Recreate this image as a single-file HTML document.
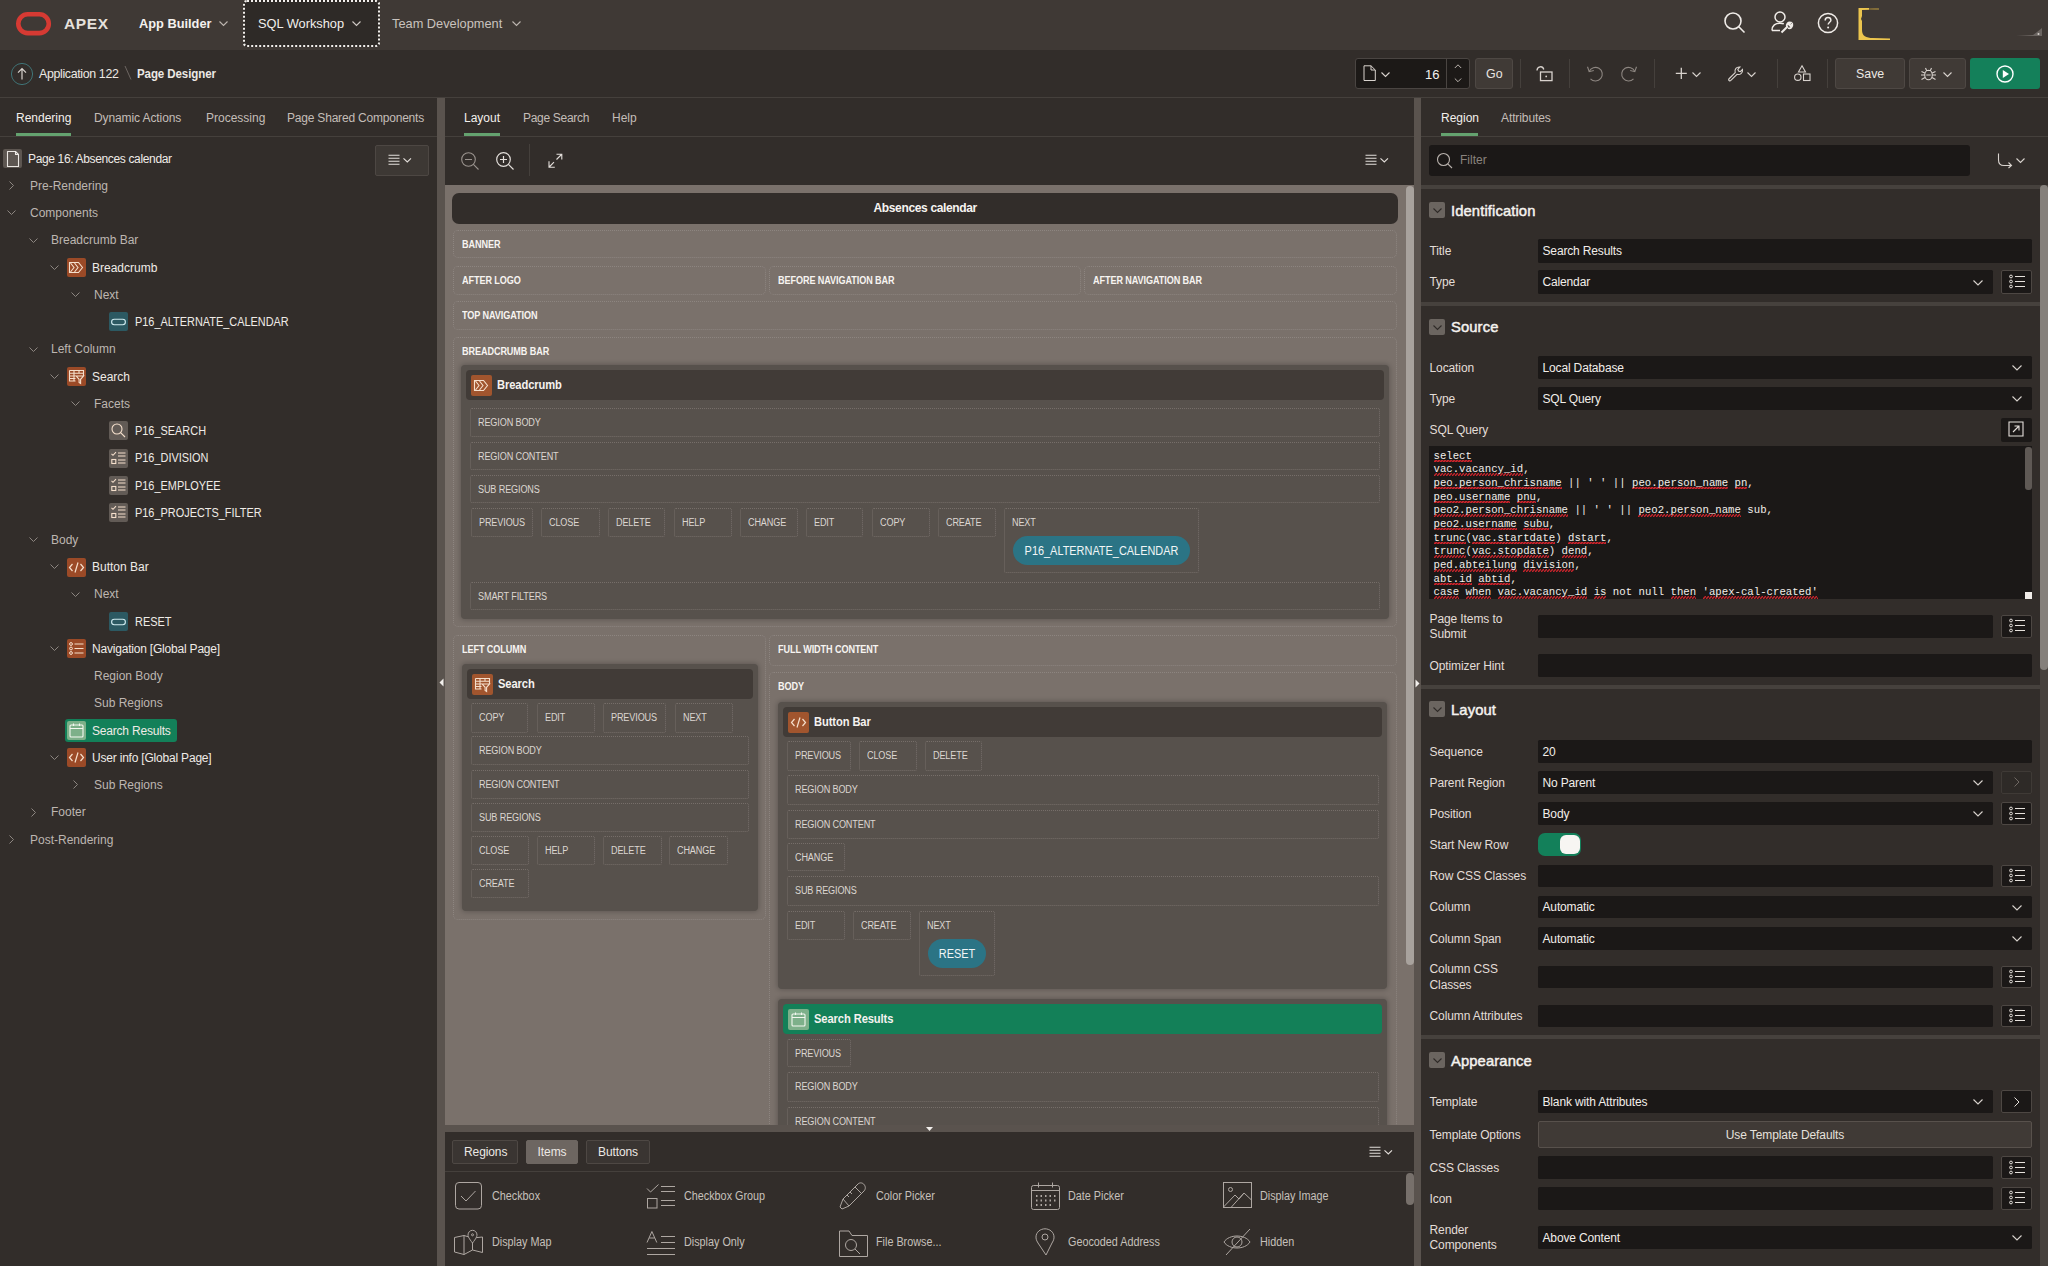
<!DOCTYPE html>
<html><head><meta charset="utf-8">
<style>
*{box-sizing:border-box;margin:0;padding:0}
html,body{width:2048px;height:1266px;overflow:hidden;background:#322d2a;font-family:"Liberation Sans",sans-serif;color:#e9e5e1}
.a{position:absolute}
.t{position:absolute;white-space:nowrap;line-height:1}
svg{position:absolute;overflow:visible}
/* header */
#hdr{left:0;top:0;width:2048px;height:50px;background:#3f3935}
#bc{left:0;top:50px;width:2048px;height:48px;background:#322d2a;border-bottom:1px solid #45403c}
#lp{left:0;top:98px;width:437px;height:1168px;background:#322d2a}
#sp1{left:437px;top:98px;width:8px;height:1168px;background:#5a534e}
#cp{left:445px;top:98px;width:969px;height:1168px;background:#322d2a}
#sp2{left:1414px;top:98px;width:7px;height:1168px;background:#5a534e}
#rp{left:1421px;top:98px;width:627px;height:1168px;background:#322d2a}
.tabline{position:absolute;height:1px;background:#45403c}
.uline{position:absolute;height:3px;background:#5f9b6b}
.code{font-family:"Liberation Mono",monospace;font-size:10.68px;color:#f2eeea;white-space:pre}
.code u{text-decoration:none;padding-bottom:0.5px;background-image:linear-gradient(135deg,transparent 38%,#c8232b 38%,#c8232b 62%,transparent 62%),linear-gradient(45deg,transparent 38%,#c8232b 38%,#c8232b 62%,transparent 62%);background-size:3px 2.5px;background-repeat:repeat-x;background-position:0 100%,1.5px 100%}
</style></head><body>
<div id="hdr" class="a">
 <svg width="40" height="30" style="left:0;top:0"><rect x="18.3" y="14.3" width="30.5" height="18.8" rx="9.4" fill="none" stroke="#d63a33" stroke-width="4.6"/></svg>
 <div class="t" style="left:64px;top:16px;font-size:15.5px;font-weight:700;letter-spacing:0.6px;color:#e6e1dc">APEX</div>
 <div class="t" style="left:139px;top:18px;font-size:12.8px;font-weight:700;color:#f4f1ee">App Builder</div>
 <svg width="10" height="6" style="left:219px;top:21px"><path d="M0.5 0.5 L4.5 4.5 L8.5 0.5" fill="none" stroke="#bdb6b0" stroke-width="1.1"/></svg>
 <div class="a" style="left:243px;top:0px;width:137px;height:47px;background:#2e2a27;border:2px dotted #f2efec;border-radius:4px"></div>
 <div class="t" style="left:258px;top:18px;font-size:12.8px;color:#f2efec">SQL Workshop</div>
 <svg width="10" height="6" style="left:352px;top:21px"><path d="M0.5 0.5 L4.5 4.5 L8.5 0.5" fill="none" stroke="#d0cac5" stroke-width="1.1"/></svg>
 <div class="t" style="left:392px;top:18px;font-size:12.8px;color:#c9c3be">Team Development</div>
 <svg width="10" height="6" style="left:512px;top:21px"><path d="M0.5 0.5 L4.5 4.5 L8.5 0.5" fill="none" stroke="#bdb6b0" stroke-width="1.1"/></svg>
 <!-- right icons -->
 <svg width="24" height="24" style="left:1723px;top:11px"><circle cx="10" cy="10" r="8" fill="none" stroke="#f0ece8" stroke-width="1.6"/><path d="M15.8 15.8 L21.5 21.5" stroke="#f0ece8" stroke-width="1.6"/></svg>
 <svg width="28" height="26" style="left:1769px;top:10px" fill="none" stroke="#f0ece8" stroke-width="1.5"><circle cx="11" cy="7" r="5"/><path d="M3 20.5 C3 15 6.5 13.2 11 13.2 C12.5 13.2 13.8 13.4 14.8 13.8 M3 20.5 L11 20.5"/><path d="M12.5 22.5 L18.8 16.2" stroke-width="2"/><path d="M18 17 C17 14.5 18.8 12 21.8 12.6 L20 14.6 L21.4 16 L23.3 14.2 C23.9 17 21.5 19 19 18" stroke-width="1.8"/></svg>
 <svg width="24" height="24" style="left:1816px;top:11px"><circle cx="12" cy="12" r="9.6" fill="none" stroke="#f0ece8" stroke-width="1.5"/><path d="M9.2 9.6 C9.2 7.6 10.5 6.6 12 6.6 C13.6 6.6 14.9 7.6 14.9 9.2 C14.9 11.2 12.2 11.4 12.2 13.6" fill="none" stroke="#f0ece8" stroke-width="1.5"/><circle cx="12.1" cy="16.6" r="1" fill="#f0ece8"/></svg>
 <svg width="36" height="34" style="left:1857px;top:7px"><path d="M1.5 1 L12 1 L22 1.5 L22 2.5 L5 3 L5 9 L4 12 L5 14 L5 23 C5 29 9 31 16 31 L33 31.5 L33 33 L1.5 33 Z" fill="#ecc54e"/><path d="M12 1 L22 1.5 L22 2.5 L12 3 Z" fill="#6b5a36"/></svg>
 <svg width="30" height="12" style="left:2015px;top:26px"><path d="M1 10 L27 10 L27 2 L22 6 L18 9 Z" fill="#6b6561"/><circle cx="23.5" cy="8" r="1" fill="#d9d4d0"/></svg>
</div>
<div id="bc" class="a">
 <svg width="26" height="26" style="left:10px;top:12px"><circle cx="12" cy="12" r="10.6" fill="none" stroke="#3f7376" stroke-width="1"/><path d="M12 17.5 L12 6.8 M8 10.6 L12 6.6 L16 10.6" fill="none" stroke="#d9d3ce" stroke-width="1.2"/></svg>
 <div class="t" style="left:39px;top:18px;font-size:12.4px;letter-spacing:-0.35px;color:#ece8e4">Application 122</div>
 <svg width="10" height="18" style="left:124px;top:15px"><path d="M1 1 L7 14.5" stroke="#6d6662" stroke-width="1"/></svg>
 <div class="t" style="left:137px;top:18px;font-size:12.4px;font-weight:700;letter-spacing:-0.1px;transform:scaleX(0.93);transform-origin:0 0;color:#ece8e4">Page Designer</div>
 <!-- toolbar -->
 <div class="a" style="left:1355px;top:8px;width:115px;height:31px;background:#1c1917;border:1px solid #4a4542;border-radius:3px"></div>
 <div class="a" style="left:1446px;top:9px;width:1px;height:29px;background:#4a4542"></div>
 <svg width="14" height="18" style="left:1363px;top:15px"><path d="M1 0.8 L8 0.8 L12.3 5 L12.3 15.5 L1 15.5 Z M8 0.8 L8 5 L12.3 5" fill="none" stroke="#d9d3ce" stroke-width="1"/></svg>
 <svg width="12" height="8" style="left:1381px;top:22px"><path d="M0.5 0.5 L4.5 4.5 L8.5 0.5" fill="none" stroke="#d9d3ce" stroke-width="1.1"/></svg>
 <div class="t" style="left:1425px;top:18px;font-size:13px;color:#f4f1ee">16</div>
 <svg width="10" height="22" style="left:1454px;top:14px"><path d="M0.8 4 L4 0.8 L7.2 4 M0.8 14.5 L4 17.7 L7.2 14.5" fill="none" stroke="#bdb6b0" stroke-width="1"/></svg>
 <div class="a" style="left:1475px;top:8px;width:38px;height:31px;background:#403a36;border:1px solid #4e4844;border-radius:3px"></div>
 <div class="t" style="left:1486px;top:18px;font-size:12.4px;color:#e9e5e1">Go</div>
 <div class="a" style="left:1520px;top:9px;width:1px;height:29px;background:#45403c"></div>
 <svg width="20" height="20" style="left:1536px;top:15px"><path d="M1 5.5 C1 1.5 6.5 0 7.8 4.5" fill="none" stroke="#d9d3ce" stroke-width="1.3"/><rect x="4.5" y="7" width="11.5" height="8.6" fill="none" stroke="#d9d3ce" stroke-width="1.3"/><circle cx="10.2" cy="11.4" r="0.9" fill="#d9d3ce"/></svg>
 <div class="a" style="left:1569px;top:9px;width:1px;height:29px;background:#45403c"></div>
 <svg width="20" height="20" style="left:1586px;top:15px"><path d="M3.2 6.5 A6.8 6.8 0 1 1 4.5 13.8" fill="none" stroke="#8d8681" stroke-width="1.1"/><path d="M1.5 1.8 L3.2 6.7 L7.8 5.5" fill="none" stroke="#8d8681" stroke-width="1.1"/></svg>
 <svg width="20" height="20" style="left:1621px;top:15px"><path d="M13.8 6.5 A6.8 6.8 0 1 0 12.5 13.8" fill="none" stroke="#8d8681" stroke-width="1.1"/><path d="M15.5 1.8 L13.8 6.7 L9.2 5.5" fill="none" stroke="#8d8681" stroke-width="1.1"/></svg>
 <div class="a" style="left:1654px;top:9px;width:1px;height:29px;background:#45403c"></div>
 <svg width="14" height="14" style="left:1675px;top:17px"><path d="M6.3 0.8 L6.3 12 M0.8 6.4 L11.8 6.4" stroke="#d9d3ce" stroke-width="1.3"/></svg>
 <svg width="12" height="8" style="left:1692px;top:22px"><path d="M0.5 0.5 L4.5 4.5 L8.5 0.5" fill="none" stroke="#d9d3ce" stroke-width="1.1"/></svg>
 <svg width="18" height="18" style="left:1727px;top:15px"><path d="M1.8 14 L8.2 7.6 C7.2 4.5 9.5 1.5 13 2 L10.8 4.3 L11.5 6 L13.3 6.7 L15.5 4.5 C16 8 13 10.3 10 9.3 L3.6 15.7 C2.8 16.5 1 15 1.8 14 Z" fill="none" stroke="#d9d3ce" stroke-width="1.1"/></svg>
 <svg width="12" height="8" style="left:1747px;top:22px"><path d="M0.5 0.5 L4.5 4.5 L8.5 0.5" fill="none" stroke="#d9d3ce" stroke-width="1.1"/></svg>
 <div class="a" style="left:1777px;top:9px;width:1px;height:29px;background:#45403c"></div>
 <svg width="20" height="20" style="left:1794px;top:15px"><path d="M8 0.8 L11.5 7 L4.5 7 Z" fill="none" stroke="#d9d3ce" stroke-width="1.1"/><circle cx="3.8" cy="12.2" r="3.2" fill="none" stroke="#d9d3ce" stroke-width="1.1"/><rect x="9.5" y="9" width="6.5" height="6.5" fill="none" stroke="#d9d3ce" stroke-width="1.1"/></svg>
 <div class="a" style="left:1827px;top:9px;width:1px;height:29px;background:#45403c"></div>
 <div class="a" style="left:1835px;top:8px;width:70px;height:31px;background:#403a36;border:1px solid #4e4844;border-radius:3px"></div>
 <div class="t" style="left:1856px;top:18px;font-size:12.4px;color:#ece8e4">Save</div>
 <div class="a" style="left:1909px;top:8px;width:57px;height:31px;background:#403a36;border:1px solid #4e4844;border-radius:3px"></div>
 <svg width="18" height="18" style="left:1920px;top:15px"><ellipse cx="8.5" cy="10" rx="3.8" ry="4.8" fill="none" stroke="#d9d3ce" stroke-width="1.1"/><path d="M5.5 3 L6.5 5.2 M11.5 3 L10.5 5.2 M6.2 5.5 L10.8 5.5 M1.5 6.5 L4.8 8 M15.5 6.5 L12.2 8 M1 10 L4.7 10 M16 10 L12.3 10 M1.5 14.5 L5 12.5 M15.5 14.5 L12 12.5 M6.3 10 L10.7 10" fill="none" stroke="#d9d3ce" stroke-width="1.1"/></svg>
 <svg width="12" height="8" style="left:1943px;top:22px"><path d="M0.5 0.5 L4.5 4.5 L8.5 0.5" fill="none" stroke="#d9d3ce" stroke-width="1.1"/></svg>
 <div class="a" style="left:1970px;top:8px;width:70px;height:31px;background:#14805a;border-radius:3px"></div>
 <svg width="20" height="20" style="left:1995px;top:14px"><circle cx="10" cy="10" r="8" fill="none" stroke="#ffffff" stroke-width="1.4"/><path d="M7.8 6 L14 10 L7.8 14 Z" fill="#ffffff"/></svg>
</div>
<div id="lp" class="a"></div>
<div id="lpc">
<div class="t" style="left:16px;top:111.84px;font-size:12px;font-weight:400;color:#f3f0ec;">Rendering</div>
<div class="t" style="left:94px;top:111.84px;font-size:12px;font-weight:400;letter-spacing:-0.1px;color:#c4bdb8;">Dynamic Actions</div>
<div class="t" style="left:206px;top:111.84px;font-size:12px;font-weight:400;color:#c4bdb8;">Processing</div>
<div class="t" style="left:287px;top:111.84px;font-size:12px;font-weight:400;letter-spacing:-0.2px;color:#c4bdb8;">Page Shared Components</div>
<div class="a" style="left:16px;top:133px;width:55px;height:3px;background:#64a26f"></div>
<div class="a" style="left:0px;top:136px;width:437px;height:1px;background:#45403c"></div>
<svg width="19" height="19" style="left:3px;top:149px"><rect x="0" y="0" width="19" height="19" rx="2" fill="#5d5651"/><path d="M4.5 2.5 L12.5 2.5 L15.5 5.5 L15.5 17.5 L4.5 17.5 Z M12.5 2.5 L12.5 5.5 L15.5 5.5" fill="none" stroke="#ece8e4" stroke-width="1.1" stroke-linejoin="round"/></svg>
<div class="t" style="left:28px;top:152.64px;font-size:12px;font-weight:400;letter-spacing:-0.35px;color:#efebe7;">Page 16: Absences calendar</div>
<div class="a" style="left:375px;top:145px;width:54px;height:31px;background:#3d3834;border:1px solid #4d4743;border-radius:2px"></div>
<svg width="30" height="14" style="left:388px;top:154px"><path d="M0.5 1.2 L11.5 1.2 M0.5 4.2 L11.5 4.2 M0.5 7.2 L11.5 7.2 M0.5 10.2 L11.5 10.2" stroke="#e4dfdb" stroke-width="1.1"/><path d="M15.5 4.3 L19.3 8 L23 4.3" fill="none" stroke="#e4dfdb" stroke-width="1.1"/></svg>
<svg width="7" height="11" style="left:9px;top:181px"><path d="M0.5 0.5 L4.5 4.5 L0.5 8.5" fill="none" stroke="#8d8681" stroke-width="1"/></svg>
<div class="t" style="left:30px;top:179.88px;font-size:12px;font-weight:400;color:#bdb6b1;">Pre-Rendering</div>
<svg width="11" height="7" style="left:7px;top:210px"><path d="M0.5 0.5 L4.5 4.5 L8.5 0.5" fill="none" stroke="#8d8681" stroke-width="1"/></svg>
<div class="t" style="left:30px;top:207.12px;font-size:12px;font-weight:400;color:#bdb6b1;">Components</div>
<svg width="11" height="7" style="left:29px;top:238px"><path d="M0.5 0.5 L4.5 4.5 L8.5 0.5" fill="none" stroke="#8d8681" stroke-width="1"/></svg>
<div class="t" style="left:51px;top:234.36px;font-size:12px;font-weight:400;color:#bdb6b1;">Breadcrumb Bar</div>
<svg width="11" height="7" style="left:50px;top:265px"><path d="M0.5 0.5 L4.5 4.5 L8.5 0.5" fill="none" stroke="#8d8681" stroke-width="1"/></svg>
<svg width="19" height="19" style="left:67px;top:258px"><rect x="0" y="0" width="19" height="19" rx="2" fill="#9b4a27"/><g transform="scale(1.0)"><path d="M2.5 4.5 L11.5 4.5 L15.5 9.5 L11.5 14.5 L2.5 14.5 Z" fill="none" stroke="#f5dfcc" stroke-width="1.1"/><path d="M3.5 5 L7 9.5 L3.5 14 M7.5 5 L11 9.5 L7.5 14" fill="none" stroke="#f5dfcc" stroke-width="1.1"/></g></svg>
<div class="t" style="left:92px;top:261.60px;font-size:12px;font-weight:400;color:#efebe7;">Breadcrumb</div>
<svg width="11" height="7" style="left:71px;top:292px"><path d="M0.5 0.5 L4.5 4.5 L8.5 0.5" fill="none" stroke="#8d8681" stroke-width="1"/></svg>
<div class="t" style="left:94px;top:288.84px;font-size:12px;font-weight:400;color:#bdb6b1;">Next</div>
<svg width="19" height="19" style="left:109px;top:312px"><rect x="0" y="0" width="19" height="19" rx="2" fill="#2c5962"/><rect x="2.6" y="7.3" width="13.8" height="5.4" rx="2.7" fill="none" stroke="#cfeaee" stroke-width="1.1"/></svg>
<div class="t" style="left:135px;top:316.08px;font-size:12px;font-weight:400;transform:scaleX(0.91);transform-origin:0 0;color:#efebe7;">P16_ALTERNATE_CALENDAR</div>
<svg width="11" height="7" style="left:29px;top:347px"><path d="M0.5 0.5 L4.5 4.5 L8.5 0.5" fill="none" stroke="#8d8681" stroke-width="1"/></svg>
<div class="t" style="left:51px;top:343.32px;font-size:12px;font-weight:400;color:#bdb6b1;">Left Column</div>
<svg width="11" height="7" style="left:50px;top:374px"><path d="M0.5 0.5 L4.5 4.5 L8.5 0.5" fill="none" stroke="#8d8681" stroke-width="1"/></svg>
<svg width="19" height="19" style="left:67px;top:367px"><rect x="0" y="0" width="19" height="19" rx="2" fill="#9b4a27"/><g transform="scale(1.0)" fill="none" stroke="#f5dfcc" stroke-width="1.1"><path d="M2.5 3.5 L16.5 3.5 L16.5 9 M2.5 3.5 L2.5 14 L8.5 14 M2.5 6.3 L16.5 6.3 M2.5 9 L8.5 9 M2.5 11.5 L8.5 11.5 M7 3.5 L7 14 M12 3.5 L12 6.3"/><path d="M9.2 9 L16.5 9 L13.6 12.3 L13.6 16.5 L12.1 15.5 L12.1 12.3 Z"/></g></svg>
<div class="t" style="left:92px;top:370.56px;font-size:12px;font-weight:400;color:#efebe7;">Search</div>
<svg width="11" height="7" style="left:71px;top:401px"><path d="M0.5 0.5 L4.5 4.5 L8.5 0.5" fill="none" stroke="#8d8681" stroke-width="1"/></svg>
<div class="t" style="left:94px;top:397.80px;font-size:12px;font-weight:400;color:#bdb6b1;">Facets</div>
<svg width="19" height="19" style="left:109px;top:421px"><rect x="0" y="0" width="19" height="19" rx="2" fill="#625b56"/><circle cx="8" cy="8" r="5" fill="none" stroke="#f5dfcc" stroke-width="1.1"/><path d="M11.6 11.6 L16 16" stroke="#f5dfcc" stroke-width="1.1"/></svg>
<div class="t" style="left:135px;top:425.04px;font-size:12px;font-weight:400;transform:scaleX(0.91);transform-origin:0 0;color:#efebe7;">P16_SEARCH</div>
<svg width="19" height="19" style="left:109px;top:449px"><rect x="0" y="0" width="19" height="19" rx="2" fill="#625b56"/><path d="M2.5 4.8 L4 6.3 L7 3.2" fill="none" stroke="#f5dfcc" stroke-width="1.1"/><rect x="2.8" y="10.5" width="4" height="4" fill="none" stroke="#f5dfcc" stroke-width="1.1"/><path d="M9 4 L16.5 4 M9 7 L16.5 7 M9 11 L16.5 11 M9 14 L16.5 14" stroke="#f5dfcc" stroke-width="1.1"/></svg>
<div class="t" style="left:135px;top:452.28px;font-size:12px;font-weight:400;transform:scaleX(0.91);transform-origin:0 0;color:#efebe7;">P16_DIVISION</div>
<svg width="19" height="19" style="left:109px;top:476px"><rect x="0" y="0" width="19" height="19" rx="2" fill="#625b56"/><path d="M2.5 4.8 L4 6.3 L7 3.2" fill="none" stroke="#f5dfcc" stroke-width="1.1"/><rect x="2.8" y="10.5" width="4" height="4" fill="none" stroke="#f5dfcc" stroke-width="1.1"/><path d="M9 4 L16.5 4 M9 7 L16.5 7 M9 11 L16.5 11 M9 14 L16.5 14" stroke="#f5dfcc" stroke-width="1.1"/></svg>
<div class="t" style="left:135px;top:479.52px;font-size:12px;font-weight:400;transform:scaleX(0.91);transform-origin:0 0;color:#efebe7;">P16_EMPLOYEE</div>
<svg width="19" height="19" style="left:109px;top:503px"><rect x="0" y="0" width="19" height="19" rx="2" fill="#625b56"/><path d="M2.5 4.8 L4 6.3 L7 3.2" fill="none" stroke="#f5dfcc" stroke-width="1.1"/><rect x="2.8" y="10.5" width="4" height="4" fill="none" stroke="#f5dfcc" stroke-width="1.1"/><path d="M9 4 L16.5 4 M9 7 L16.5 7 M9 11 L16.5 11 M9 14 L16.5 14" stroke="#f5dfcc" stroke-width="1.1"/></svg>
<div class="t" style="left:135px;top:506.76px;font-size:12px;font-weight:400;transform:scaleX(0.91);transform-origin:0 0;color:#efebe7;">P16_PROJECTS_FILTER</div>
<svg width="11" height="7" style="left:29px;top:537px"><path d="M0.5 0.5 L4.5 4.5 L8.5 0.5" fill="none" stroke="#8d8681" stroke-width="1"/></svg>
<div class="t" style="left:51px;top:534.00px;font-size:12px;font-weight:400;color:#bdb6b1;">Body</div>
<svg width="11" height="7" style="left:50px;top:564px"><path d="M0.5 0.5 L4.5 4.5 L8.5 0.5" fill="none" stroke="#8d8681" stroke-width="1"/></svg>
<svg width="19" height="19" style="left:67px;top:558px"><rect x="0" y="0" width="19" height="19" rx="2" fill="#9b4a27"/><g transform="scale(1.0)"><path d="M5.5 6 L2.5 9.5 L5.5 13 M13.5 6 L16.5 9.5 L13.5 13 M11 4.5 L8 14.5" fill="none" stroke="#f5dfcc" stroke-width="1.2"/></g></svg>
<div class="t" style="left:92px;top:561.24px;font-size:12px;font-weight:400;color:#efebe7;">Button Bar</div>
<svg width="11" height="7" style="left:71px;top:592px"><path d="M0.5 0.5 L4.5 4.5 L8.5 0.5" fill="none" stroke="#8d8681" stroke-width="1"/></svg>
<div class="t" style="left:94px;top:588.48px;font-size:12px;font-weight:400;color:#bdb6b1;">Next</div>
<svg width="19" height="19" style="left:109px;top:612px"><rect x="0" y="0" width="19" height="19" rx="2" fill="#2c5962"/><rect x="2.6" y="7.3" width="13.8" height="5.4" rx="2.7" fill="none" stroke="#cfeaee" stroke-width="1.1"/></svg>
<div class="t" style="left:135px;top:615.72px;font-size:12px;font-weight:400;transform:scaleX(0.91);transform-origin:0 0;color:#efebe7;">RESET</div>
<svg width="11" height="7" style="left:50px;top:646px"><path d="M0.5 0.5 L4.5 4.5 L8.5 0.5" fill="none" stroke="#8d8681" stroke-width="1"/></svg>
<svg width="19" height="19" style="left:67px;top:639px"><rect x="0" y="0" width="19" height="19" rx="2" fill="#9b4a27"/><g transform="scale(1.0)"><circle cx="4" cy="5" r="1.4" fill="none" stroke="#f5dfcc" stroke-width="1"/><circle cx="4" cy="9.5" r="1.4" fill="none" stroke="#f5dfcc" stroke-width="1"/><circle cx="4" cy="14" r="1.4" fill="none" stroke="#f5dfcc" stroke-width="1"/><path d="M7.5 5 L16.5 5 M7.5 9.5 L16.5 9.5 M7.5 14 L16.5 14" stroke="#f5dfcc" stroke-width="1.1"/></g></svg>
<div class="t" style="left:92px;top:642.96px;font-size:12px;font-weight:400;letter-spacing:-0.2px;color:#efebe7;">Navigation [Global Page]</div>
<div class="t" style="left:94px;top:670.20px;font-size:12px;font-weight:400;color:#bdb6b1;">Region Body</div>
<div class="t" style="left:94px;top:697.44px;font-size:12px;font-weight:400;color:#bdb6b1;">Sub Regions</div>
<div class="a" style="left:65px;top:719.1px;width:112px;height:23px;background:#138059;border-radius:3px"></div>
<svg width="19" height="19" style="left:67px;top:721px"><rect x="0" y="0" width="19" height="19" rx="2" fill="#7db089"/><rect x="3" y="4" width="13" height="12" rx="1" fill="none" stroke="#f3f7ef" stroke-width="1.1"/><path d="M3 7.5 L16 7.5 M6.5 2.5 L6.5 5 M12.5 2.5 L12.5 5" stroke="#f3f7ef" stroke-width="1.1"/></svg>
<div class="t" style="left:92px;top:724.68px;font-size:12px;font-weight:400;letter-spacing:-0.2px;color:#efebe7;">Search Results</div>
<svg width="11" height="7" style="left:50px;top:755px"><path d="M0.5 0.5 L4.5 4.5 L8.5 0.5" fill="none" stroke="#8d8681" stroke-width="1"/></svg>
<svg width="19" height="19" style="left:67px;top:748px"><rect x="0" y="0" width="19" height="19" rx="2" fill="#9b4a27"/><g transform="scale(1.0)"><path d="M5.5 6 L2.5 9.5 L5.5 13 M13.5 6 L16.5 9.5 L13.5 13 M11 4.5 L8 14.5" fill="none" stroke="#f5dfcc" stroke-width="1.2"/></g></svg>
<div class="t" style="left:92px;top:751.92px;font-size:12px;font-weight:400;letter-spacing:-0.2px;color:#efebe7;">User info [Global Page]</div>
<svg width="7" height="11" style="left:73px;top:780px"><path d="M0.5 0.5 L4.5 4.5 L0.5 8.5" fill="none" stroke="#8d8681" stroke-width="1"/></svg>
<div class="t" style="left:94px;top:779.16px;font-size:12px;font-weight:400;color:#bdb6b1;">Sub Regions</div>
<svg width="7" height="11" style="left:31px;top:808px"><path d="M0.5 0.5 L4.5 4.5 L0.5 8.5" fill="none" stroke="#8d8681" stroke-width="1"/></svg>
<div class="t" style="left:51px;top:806.40px;font-size:12px;font-weight:400;color:#bdb6b1;">Footer</div>
<svg width="7" height="11" style="left:9px;top:835px"><path d="M0.5 0.5 L4.5 4.5 L0.5 8.5" fill="none" stroke="#8d8681" stroke-width="1"/></svg>
<div class="t" style="left:30px;top:833.64px;font-size:12px;font-weight:400;color:#bdb6b1;">Post-Rendering</div>
</div>
<div id="sp1" class="a"></div>
<div id="cp" class="a"></div>
<!--C--><div class="t" style="left:464px;top:111.84px;font-size:12px;font-weight:400;color:#f3f0ec;">Layout</div>
<div class="t" style="left:523px;top:111.84px;font-size:12px;font-weight:400;letter-spacing:-0.3px;color:#c4bdb8;">Page Search</div>
<div class="t" style="left:612px;top:111.84px;font-size:12px;font-weight:400;color:#c4bdb8;">Help</div>
<div class="a" style="left:464px;top:133px;width:36px;height:3px;background:#64a26f"></div>
<div class="a" style="left:445px;top:136px;width:969px;height:1px;background:#45403c"></div>
<svg width="22" height="22" style="left:460px;top:151px"><circle cx="8.5" cy="8.5" r="6.8" fill="none" stroke="#9a938e" stroke-width="1.1"/><path d="M13.4 13.4 L18.5 18.5 M5 8.5 L12 8.5" stroke="#9a938e" stroke-width="1.1"/></svg>
<svg width="22" height="22" style="left:495px;top:151px"><circle cx="8.5" cy="8.5" r="6.8" fill="none" stroke="#e4dfdb" stroke-width="1.2"/><path d="M13.4 13.4 L18.5 18.5 M5 8.5 L12 8.5 M8.5 5 L8.5 12" stroke="#e4dfdb" stroke-width="1.2"/></svg>
<div class="a" style="left:529px;top:144px;width:1px;height:32px;background:#45403c"></div>
<svg width="18" height="18" style="left:548px;top:153px"><path d="M1.2 14 L6 9.2 M8.5 6.5 L13.5 1.5 M8.5 1.2 L13.8 1.2 L13.8 6.5 M1 8.3 L1 14.2 L6.8 14.2" fill="none" stroke="#e4dfdb" stroke-width="1.1"/></svg>
<svg width="30" height="14" style="left:1365px;top:154px"><path d="M0.5 1.2 L11.5 1.2 M0.5 4.2 L11.5 4.2 M0.5 7.2 L11.5 7.2 M0.5 10.2 L11.5 10.2" stroke="#e4dfdb" stroke-width="1.1"/><path d="M15.5 4.3 L19.3 8 L23 4.3" fill="none" stroke="#e4dfdb" stroke-width="1.1"/></svg>
<div class="a" style="left:445px;top:185px;width:969px;height:940px;background:#7a716b;overflow:hidden" id="canvas"></div>
<div class="a" style="left:0;top:0;width:2048px;height:1125px;clip-path:inset(185px 634px 0 445px)"><div class="a" style="left:452px;top:193px;width:946px;height:31px;background:#322d2a;border-radius:7px;"></div>
<div class="t" style="left:873.5px;top:202.04px;font-size:12px;font-weight:700;letter-spacing:-0.35px;color:#f7f4f1;">Absences calendar</div>
<div class="a" style="left:453px;top:230px;width:944px;height:28px;background:transparent;border:1px dotted #8d8580;border-radius:5px;"></div><div class="t" style="left:461.5px;top:239.53px;font-size:10px;font-weight:700;letter-spacing:-0.1px;transform:scaleX(0.91);transform-origin:0 0;color:#f7f4f1;">BANNER</div>
<div class="a" style="left:453px;top:266px;width:313px;height:29px;background:transparent;border:1px dotted #8d8580;border-radius:5px;"></div><div class="t" style="left:461.5px;top:275.54px;font-size:10px;font-weight:700;letter-spacing:-0.1px;transform:scaleX(0.91);transform-origin:0 0;color:#f7f4f1;">AFTER LOGO</div>
<div class="a" style="left:769px;top:266px;width:312px;height:29px;background:transparent;border:1px dotted #8d8580;border-radius:5px;"></div><div class="t" style="left:777.5px;top:275.54px;font-size:10px;font-weight:700;letter-spacing:-0.1px;transform:scaleX(0.91);transform-origin:0 0;color:#f7f4f1;">BEFORE NAVIGATION BAR</div>
<div class="a" style="left:1084px;top:266px;width:313px;height:29px;background:transparent;border:1px dotted #8d8580;border-radius:5px;"></div><div class="t" style="left:1092.5px;top:275.54px;font-size:10px;font-weight:700;letter-spacing:-0.1px;transform:scaleX(0.91);transform-origin:0 0;color:#f7f4f1;">AFTER NAVIGATION BAR</div>
<div class="a" style="left:453px;top:301px;width:944px;height:29px;background:transparent;border:1px dotted #8d8580;border-radius:5px;"></div><div class="t" style="left:461.5px;top:310.54px;font-size:10px;font-weight:700;letter-spacing:-0.1px;transform:scaleX(0.91);transform-origin:0 0;color:#f7f4f1;">TOP NAVIGATION</div>
<div class="a" style="left:453px;top:337px;width:944px;height:290px;background:transparent;border:1px dotted #8d8580;border-radius:5px;"></div><div class="t" style="left:461.5px;top:346.54px;font-size:10px;font-weight:700;letter-spacing:-0.1px;transform:scaleX(0.91);transform-origin:0 0;color:#f7f4f1;">BREADCRUMB BAR</div>
<div class="a" style="left:461px;top:365px;width:928px;height:254px;background:#57514c;border-radius:4px;box-shadow:0 0 5px 1px rgba(0,0,0,0.22)"></div><div class="a" style="left:466px;top:370px;width:918px;height:30px;background:#413b37;border-radius:4px;"></div><svg width="21" height="21" style="left:471px;top:374.5px"><rect width="21" height="21" rx="2" fill="#a1552e"/><g transform="translate(1,1)"><g transform="scale(1.0)"><path d="M2.5 4.5 L11.5 4.5 L15.5 9.5 L11.5 14.5 L2.5 14.5 Z" fill="none" stroke="#f5dfcc" stroke-width="1.1"/><path d="M3.5 5 L7 9.5 L3.5 14 M7.5 5 L11 9.5 L7.5 14" fill="none" stroke="#f5dfcc" stroke-width="1.1"/></g></g></svg><div class="t" style="left:497px;top:379.14px;font-size:12px;font-weight:700;letter-spacing:-0.1px;transform:scaleX(0.93);transform-origin:0 0;color:#f5f2ef;">Breadcrumb</div>
<div class="a" style="left:470px;top:408px;width:910px;height:29px;background:transparent;border:1px dotted #766e69;border-radius:2px;"></div><div class="t" style="left:478px;top:417.54px;font-size:10px;font-weight:400;letter-spacing:-0.15px;transform:scaleX(0.91);transform-origin:0 0;color:#dcd6d1;">REGION BODY</div>
<div class="a" style="left:470px;top:442px;width:910px;height:28px;background:transparent;border:1px dotted #766e69;border-radius:2px;"></div><div class="t" style="left:478px;top:451.54px;font-size:10px;font-weight:400;letter-spacing:-0.15px;transform:scaleX(0.91);transform-origin:0 0;color:#dcd6d1;">REGION CONTENT</div>
<div class="a" style="left:470px;top:475px;width:910px;height:28px;background:transparent;border:1px dotted #766e69;border-radius:2px;"></div><div class="t" style="left:478px;top:484.54px;font-size:10px;font-weight:400;letter-spacing:-0.15px;transform:scaleX(0.91);transform-origin:0 0;color:#dcd6d1;">SUB REGIONS</div>
<div class="a" style="left:471px;top:508px;width:62px;height:29px;background:transparent;border:1px dotted #766e69;border-radius:2px;"></div><div class="t" style="left:479px;top:517.53px;font-size:10px;font-weight:400;letter-spacing:-0.15px;transform:scaleX(0.91);transform-origin:0 0;color:#dcd6d1;">PREVIOUS</div>
<div class="a" style="left:541px;top:508px;width:59px;height:29px;background:transparent;border:1px dotted #766e69;border-radius:2px;"></div><div class="t" style="left:549px;top:517.53px;font-size:10px;font-weight:400;letter-spacing:-0.15px;transform:scaleX(0.91);transform-origin:0 0;color:#dcd6d1;">CLOSE</div>
<div class="a" style="left:608px;top:508px;width:57px;height:29px;background:transparent;border:1px dotted #766e69;border-radius:2px;"></div><div class="t" style="left:616px;top:517.53px;font-size:10px;font-weight:400;letter-spacing:-0.15px;transform:scaleX(0.91);transform-origin:0 0;color:#dcd6d1;">DELETE</div>
<div class="a" style="left:674px;top:508px;width:58px;height:29px;background:transparent;border:1px dotted #766e69;border-radius:2px;"></div><div class="t" style="left:682px;top:517.53px;font-size:10px;font-weight:400;letter-spacing:-0.15px;transform:scaleX(0.91);transform-origin:0 0;color:#dcd6d1;">HELP</div>
<div class="a" style="left:740px;top:508px;width:58px;height:29px;background:transparent;border:1px dotted #766e69;border-radius:2px;"></div><div class="t" style="left:748px;top:517.53px;font-size:10px;font-weight:400;letter-spacing:-0.15px;transform:scaleX(0.91);transform-origin:0 0;color:#dcd6d1;">CHANGE</div>
<div class="a" style="left:806px;top:508px;width:57px;height:29px;background:transparent;border:1px dotted #766e69;border-radius:2px;"></div><div class="t" style="left:814px;top:517.53px;font-size:10px;font-weight:400;letter-spacing:-0.15px;transform:scaleX(0.91);transform-origin:0 0;color:#dcd6d1;">EDIT</div>
<div class="a" style="left:872px;top:508px;width:58px;height:29px;background:transparent;border:1px dotted #766e69;border-radius:2px;"></div><div class="t" style="left:880px;top:517.53px;font-size:10px;font-weight:400;letter-spacing:-0.15px;transform:scaleX(0.91);transform-origin:0 0;color:#dcd6d1;">COPY</div>
<div class="a" style="left:938px;top:508px;width:58px;height:29px;background:transparent;border:1px dotted #766e69;border-radius:2px;"></div><div class="t" style="left:946px;top:517.53px;font-size:10px;font-weight:400;letter-spacing:-0.15px;transform:scaleX(0.91);transform-origin:0 0;color:#dcd6d1;">CREATE</div>
<div class="a" style="left:1004px;top:508px;width:195px;height:65px;background:transparent;border:1px dotted #766e69;border-radius:2px;"></div><div class="t" style="left:1012px;top:517.53px;font-size:10px;font-weight:400;letter-spacing:-0.15px;transform:scaleX(0.91);transform-origin:0 0;color:#dcd6d1;">NEXT</div>
<div class="a" style="left:1013px;top:536px;width:177px;height:29px;background:#2b7485;border-radius:15px"></div><div class="t" style="left:1013px;width:177px;text-align:center;top:544.74px;font-size:12px;transform:scaleX(0.91);transform-origin:50% 0;color:#f1f6f7">P16_ALTERNATE_CALENDAR</div>
<div class="a" style="left:470px;top:582px;width:910px;height:28px;background:transparent;border:1px dotted #766e69;border-radius:2px;"></div><div class="t" style="left:478px;top:591.53px;font-size:10px;font-weight:400;letter-spacing:-0.15px;transform:scaleX(0.91);transform-origin:0 0;color:#dcd6d1;">SMART FILTERS</div>
<div class="a" style="left:453px;top:635px;width:313px;height:285px;background:transparent;border:1px dotted #8d8580;border-radius:5px;"></div><div class="t" style="left:461.5px;top:644.53px;font-size:10px;font-weight:700;letter-spacing:-0.1px;transform:scaleX(0.91);transform-origin:0 0;color:#f7f4f1;">LEFT COLUMN</div>
<div class="a" style="left:462px;top:664px;width:296px;height:247px;background:#57514c;border-radius:4px;box-shadow:0 0 5px 1px rgba(0,0,0,0.22)"></div><div class="a" style="left:467px;top:669px;width:286px;height:30px;background:#413b37;border-radius:4px;"></div><svg width="21" height="21" style="left:472px;top:673.5px"><rect width="21" height="21" rx="2" fill="#a1552e"/><g transform="translate(1,1)"><g transform="scale(1.0)" fill="none" stroke="#f5dfcc" stroke-width="1.1"><path d="M2.5 3.5 L16.5 3.5 L16.5 9 M2.5 3.5 L2.5 14 L8.5 14 M2.5 6.3 L16.5 6.3 M2.5 9 L8.5 9 M2.5 11.5 L8.5 11.5 M7 3.5 L7 14 M12 3.5 L12 6.3"/><path d="M9.2 9 L16.5 9 L13.6 12.3 L13.6 16.5 L12.1 15.5 L12.1 12.3 Z"/></g></g></svg><div class="t" style="left:498px;top:678.14px;font-size:12px;font-weight:700;letter-spacing:-0.1px;transform:scaleX(0.93);transform-origin:0 0;color:#f5f2ef;">Search</div>
<div class="a" style="left:471px;top:703px;width:57px;height:30px;background:transparent;border:1px dotted #766e69;border-radius:2px;"></div><div class="t" style="left:479px;top:712.53px;font-size:10px;font-weight:400;letter-spacing:-0.15px;transform:scaleX(0.91);transform-origin:0 0;color:#dcd6d1;">COPY</div>
<div class="a" style="left:537px;top:703px;width:58px;height:30px;background:transparent;border:1px dotted #766e69;border-radius:2px;"></div><div class="t" style="left:545px;top:712.53px;font-size:10px;font-weight:400;letter-spacing:-0.15px;transform:scaleX(0.91);transform-origin:0 0;color:#dcd6d1;">EDIT</div>
<div class="a" style="left:603px;top:703px;width:63px;height:30px;background:transparent;border:1px dotted #766e69;border-radius:2px;"></div><div class="t" style="left:611px;top:712.53px;font-size:10px;font-weight:400;letter-spacing:-0.15px;transform:scaleX(0.91);transform-origin:0 0;color:#dcd6d1;">PREVIOUS</div>
<div class="a" style="left:675px;top:703px;width:58px;height:30px;background:transparent;border:1px dotted #766e69;border-radius:2px;"></div><div class="t" style="left:683px;top:712.53px;font-size:10px;font-weight:400;letter-spacing:-0.15px;transform:scaleX(0.91);transform-origin:0 0;color:#dcd6d1;">NEXT</div>
<div class="a" style="left:471px;top:736px;width:278px;height:29px;background:transparent;border:1px dotted #766e69;border-radius:2px;"></div><div class="t" style="left:479px;top:745.53px;font-size:10px;font-weight:400;letter-spacing:-0.15px;transform:scaleX(0.91);transform-origin:0 0;color:#dcd6d1;">REGION BODY</div>
<div class="a" style="left:471px;top:770px;width:278px;height:29px;background:transparent;border:1px dotted #766e69;border-radius:2px;"></div><div class="t" style="left:479px;top:779.53px;font-size:10px;font-weight:400;letter-spacing:-0.15px;transform:scaleX(0.91);transform-origin:0 0;color:#dcd6d1;">REGION CONTENT</div>
<div class="a" style="left:471px;top:803px;width:278px;height:29px;background:transparent;border:1px dotted #766e69;border-radius:2px;"></div><div class="t" style="left:479px;top:812.53px;font-size:10px;font-weight:400;letter-spacing:-0.15px;transform:scaleX(0.91);transform-origin:0 0;color:#dcd6d1;">SUB REGIONS</div>
<div class="a" style="left:471px;top:836px;width:58px;height:29px;background:transparent;border:1px dotted #766e69;border-radius:2px;"></div><div class="t" style="left:479px;top:845.53px;font-size:10px;font-weight:400;letter-spacing:-0.15px;transform:scaleX(0.91);transform-origin:0 0;color:#dcd6d1;">CLOSE</div>
<div class="a" style="left:537px;top:836px;width:58px;height:29px;background:transparent;border:1px dotted #766e69;border-radius:2px;"></div><div class="t" style="left:545px;top:845.53px;font-size:10px;font-weight:400;letter-spacing:-0.15px;transform:scaleX(0.91);transform-origin:0 0;color:#dcd6d1;">HELP</div>
<div class="a" style="left:603px;top:836px;width:59px;height:29px;background:transparent;border:1px dotted #766e69;border-radius:2px;"></div><div class="t" style="left:611px;top:845.53px;font-size:10px;font-weight:400;letter-spacing:-0.15px;transform:scaleX(0.91);transform-origin:0 0;color:#dcd6d1;">DELETE</div>
<div class="a" style="left:669px;top:836px;width:59px;height:29px;background:transparent;border:1px dotted #766e69;border-radius:2px;"></div><div class="t" style="left:677px;top:845.53px;font-size:10px;font-weight:400;letter-spacing:-0.15px;transform:scaleX(0.91);transform-origin:0 0;color:#dcd6d1;">CHANGE</div>
<div class="a" style="left:471px;top:869px;width:58px;height:29px;background:transparent;border:1px dotted #766e69;border-radius:2px;"></div><div class="t" style="left:479px;top:878.53px;font-size:10px;font-weight:400;letter-spacing:-0.15px;transform:scaleX(0.91);transform-origin:0 0;color:#dcd6d1;">CREATE</div>
<div class="a" style="left:769px;top:635px;width:628px;height:31px;background:transparent;border:1px dotted #8d8580;border-radius:5px;"></div><div class="t" style="left:777.5px;top:644.53px;font-size:10px;font-weight:700;letter-spacing:-0.1px;transform:scaleX(0.91);transform-origin:0 0;color:#f7f4f1;">FULL WIDTH CONTENT</div>
<div class="a" style="left:769px;top:672px;width:628px;height:528px;background:transparent;border:1px dotted #8d8580;border-radius:5px;"></div><div class="t" style="left:777.5px;top:681.53px;font-size:10px;font-weight:700;letter-spacing:-0.1px;transform:scaleX(0.91);transform-origin:0 0;color:#f7f4f1;">BODY</div>
<div class="a" style="left:778px;top:702px;width:609px;height:287px;background:#57514c;border-radius:4px;box-shadow:0 0 5px 1px rgba(0,0,0,0.22)"></div><div class="a" style="left:783px;top:707px;width:599px;height:30px;background:#413b37;border-radius:4px;"></div><svg width="21" height="21" style="left:788px;top:711.5px"><rect width="21" height="21" rx="2" fill="#a1552e"/><g transform="translate(1,1)"><g transform="scale(1.0)"><path d="M5.5 6 L2.5 9.5 L5.5 13 M13.5 6 L16.5 9.5 L13.5 13 M11 4.5 L8 14.5" fill="none" stroke="#f5dfcc" stroke-width="1.2"/></g></g></svg><div class="t" style="left:814px;top:716.14px;font-size:12px;font-weight:700;letter-spacing:-0.1px;transform:scaleX(0.93);transform-origin:0 0;color:#f5f2ef;">Button Bar</div>
<div class="a" style="left:787px;top:741px;width:64px;height:30px;background:transparent;border:1px dotted #766e69;border-radius:2px;"></div><div class="t" style="left:795px;top:750.53px;font-size:10px;font-weight:400;letter-spacing:-0.15px;transform:scaleX(0.91);transform-origin:0 0;color:#dcd6d1;">PREVIOUS</div>
<div class="a" style="left:859px;top:741px;width:58px;height:30px;background:transparent;border:1px dotted #766e69;border-radius:2px;"></div><div class="t" style="left:867px;top:750.53px;font-size:10px;font-weight:400;letter-spacing:-0.15px;transform:scaleX(0.91);transform-origin:0 0;color:#dcd6d1;">CLOSE</div>
<div class="a" style="left:925px;top:741px;width:57px;height:30px;background:transparent;border:1px dotted #766e69;border-radius:2px;"></div><div class="t" style="left:933px;top:750.53px;font-size:10px;font-weight:400;letter-spacing:-0.15px;transform:scaleX(0.91);transform-origin:0 0;color:#dcd6d1;">DELETE</div>
<div class="a" style="left:787px;top:775px;width:592px;height:30px;background:transparent;border:1px dotted #766e69;border-radius:2px;"></div><div class="t" style="left:795px;top:784.53px;font-size:10px;font-weight:400;letter-spacing:-0.15px;transform:scaleX(0.91);transform-origin:0 0;color:#dcd6d1;">REGION BODY</div>
<div class="a" style="left:787px;top:810px;width:592px;height:29px;background:transparent;border:1px dotted #766e69;border-radius:2px;"></div><div class="t" style="left:795px;top:819.53px;font-size:10px;font-weight:400;letter-spacing:-0.15px;transform:scaleX(0.91);transform-origin:0 0;color:#dcd6d1;">REGION CONTENT</div>
<div class="a" style="left:787px;top:843px;width:58px;height:28px;background:transparent;border:1px dotted #766e69;border-radius:2px;"></div><div class="t" style="left:795px;top:852.53px;font-size:10px;font-weight:400;letter-spacing:-0.15px;transform:scaleX(0.91);transform-origin:0 0;color:#dcd6d1;">CHANGE</div>
<div class="a" style="left:787px;top:876px;width:592px;height:30px;background:transparent;border:1px dotted #766e69;border-radius:2px;"></div><div class="t" style="left:795px;top:885.53px;font-size:10px;font-weight:400;letter-spacing:-0.15px;transform:scaleX(0.91);transform-origin:0 0;color:#dcd6d1;">SUB REGIONS</div>
<div class="a" style="left:787px;top:911px;width:58px;height:29px;background:transparent;border:1px dotted #766e69;border-radius:2px;"></div><div class="t" style="left:795px;top:920.53px;font-size:10px;font-weight:400;letter-spacing:-0.15px;transform:scaleX(0.91);transform-origin:0 0;color:#dcd6d1;">EDIT</div>
<div class="a" style="left:853px;top:911px;width:58px;height:29px;background:transparent;border:1px dotted #766e69;border-radius:2px;"></div><div class="t" style="left:861px;top:920.53px;font-size:10px;font-weight:400;letter-spacing:-0.15px;transform:scaleX(0.91);transform-origin:0 0;color:#dcd6d1;">CREATE</div>
<div class="a" style="left:919px;top:911px;width:76px;height:65px;background:transparent;border:1px dotted #766e69;border-radius:2px;"></div><div class="t" style="left:927px;top:920.53px;font-size:10px;font-weight:400;letter-spacing:-0.15px;transform:scaleX(0.91);transform-origin:0 0;color:#dcd6d1;">NEXT</div>
<div class="a" style="left:928px;top:939px;width:58px;height:29px;background:#2b7485;border-radius:15px"></div><div class="t" style="left:928px;width:58px;text-align:center;top:947.74px;font-size:12px;transform:scaleX(0.91);transform-origin:50% 0;color:#f1f6f7">RESET</div>
<div class="a" style="left:778px;top:999px;width:609px;height:301px;background:#57514c;border-radius:4px;box-shadow:0 0 5px 1px rgba(0,0,0,0.22)"></div><div class="a" style="left:783px;top:1004px;width:599px;height:30px;background:#138058;border-radius:4px;"></div><svg width="21" height="21" style="left:788px;top:1008.5px"><rect width="21" height="21" rx="2" fill="#7db08a"/><g transform="translate(1,1)"><rect x="3" y="4" width="13" height="12" rx="1" fill="none" stroke="#f3f7ef" stroke-width="1.1"/><path d="M3 7.5 L16 7.5 M6.5 2.5 L6.5 5 M12.5 2.5 L12.5 5" stroke="#f3f7ef" stroke-width="1.1"/></g></svg><div class="t" style="left:814px;top:1013.14px;font-size:12px;font-weight:700;letter-spacing:-0.1px;transform:scaleX(0.93);transform-origin:0 0;color:#f5f2ef;">Search Results</div>
<div class="a" style="left:787px;top:1039px;width:64px;height:28px;background:transparent;border:1px dotted #766e69;border-radius:2px;"></div><div class="t" style="left:795px;top:1048.54px;font-size:10px;font-weight:400;letter-spacing:-0.15px;transform:scaleX(0.91);transform-origin:0 0;color:#dcd6d1;">PREVIOUS</div>
<div class="a" style="left:787px;top:1072px;width:592px;height:30px;background:transparent;border:1px dotted #766e69;border-radius:2px;"></div><div class="t" style="left:795px;top:1081.54px;font-size:10px;font-weight:400;letter-spacing:-0.15px;transform:scaleX(0.91);transform-origin:0 0;color:#dcd6d1;">REGION BODY</div>
<div class="a" style="left:787px;top:1107px;width:592px;height:33px;background:transparent;border:1px dotted #766e69;border-radius:2px;"></div><div class="t" style="left:795px;top:1116.54px;font-size:10px;font-weight:400;letter-spacing:-0.15px;transform:scaleX(0.91);transform-origin:0 0;color:#dcd6d1;">REGION CONTENT</div>
<div class="a" style="left:1406px;top:186px;width:8px;height:779px;background:#a8a29d;border-radius:4px"></div></div>
<div class="a" style="left:445px;top:1125px;width:969px;height:7px;background:#5a534e"></div>
<svg width="10" height="6" style="left:926px;top:1126.5px"><path d="M0 0 L7 0 L3.5 4 Z" fill="#f2efec"/></svg>
<div class="a" style="left:445px;top:1132px;width:969px;height:134px;background:#322d2a"></div>
<div class="a" style="left:452px;top:1140px;width:66px;height:24px;background:#3a3532;border:1px solid #4e4844;border-radius:2px"></div>
<div class="t" style="left:464px;top:1145.84px;font-size:12px;font-weight:400;letter-spacing:-0.1px;color:#ece8e4;">Regions</div>
<div class="a" style="left:526px;top:1140px;width:52px;height:24px;background:#6d6661;border:1px solid #6d6661;border-radius:2px"></div>
<div class="t" style="left:537.6px;top:1145.84px;font-size:12px;font-weight:400;letter-spacing:-0.1px;color:#ece8e4;">Items</div>
<div class="a" style="left:586px;top:1140px;width:64px;height:24px;background:#3a3532;border:1px solid #4e4844;border-radius:2px"></div>
<div class="t" style="left:598px;top:1145.84px;font-size:12px;font-weight:400;letter-spacing:-0.1px;color:#ece8e4;">Buttons</div>
<svg width="30" height="14" style="left:1369px;top:1146px"><path d="M0.5 1.2 L11.5 1.2 M0.5 4.2 L11.5 4.2 M0.5 7.2 L11.5 7.2 M0.5 10.2 L11.5 10.2" stroke="#e4dfdb" stroke-width="1.1"/><path d="M15.5 4.3 L19.3 8 L23 4.3" fill="none" stroke="#e4dfdb" stroke-width="1.1"/></svg>
<div class="a" style="left:445px;top:1171px;width:969px;height:1px;background:#45403c"></div>
<div class="a" style="left:1406px;top:1173px;width:8px;height:32px;background:#77706b;border-radius:4px"></div>
<svg width="30" height="30" style="left:455px;top:1182px" fill="none" stroke="#aea7a2" stroke-width="1"><rect x="0.5" y="0.5" width="26" height="26.5" rx="3.5"/><path d="M6 14 L11 19 L20.5 9"/></svg>
<div class="t" style="left:491.5px;top:1189.84px;font-size:12px;font-weight:400;transform:scaleX(0.9);transform-origin:0 0;color:#c6c0bb;">Checkbox</div>
<svg width="30" height="30" style="left:455px;top:1228px" fill="none" stroke="#aea7a2" stroke-width="1"><path d="M-0.5 9.5 L9 7.5 L17.5 10 L27.5 9 L27.5 24.5 L17.5 22 L9 26.5 L-0.5 24 Z M9 7.5 L9 26.5 M17.5 13 L17.5 22"/><path d="M17.5 15 C14 10.5 13 8.5 13 7 C13 4.3 15 2.3 17.5 2.3 C20 2.3 22 4.3 22 7 C22 8.5 21 10.5 17.5 15 Z" fill="#322d2a"/><circle cx="17.5" cy="6.8" r="1"/></svg>
<div class="t" style="left:491.5px;top:1236.14px;font-size:12px;font-weight:400;transform:scaleX(0.9);transform-origin:0 0;color:#c6c0bb;">Display Map</div>
<svg width="30" height="30" style="left:647px;top:1182px" fill="none" stroke="#aea7a2" stroke-width="1"><path d="M0 6.5 L3.5 10 L11.5 2.5 M14 4.5 L28 4.5 M14 9.5 L28 9.5 M14 18.5 L28 18.5 M14 23.5 L28 23.5"/><rect x="0.5" y="16.5" width="9.5" height="9.5"/></svg>
<div class="t" style="left:683.5px;top:1189.84px;font-size:12px;font-weight:400;transform:scaleX(0.9);transform-origin:0 0;color:#c6c0bb;">Checkbox Group</div>
<svg width="30" height="30" style="left:647px;top:1228px" fill="none" stroke="#aea7a2" stroke-width="1"><path d="M0 14.5 L4.9 3.5 L9.8 14.5 M2.2 10 L7.6 10 M14 8.5 L28 8.5 M14 14.5 L28 14.5 M0 20.5 L28 20.5 M0 26.5 L28 26.5"/></svg>
<div class="t" style="left:683.5px;top:1236.14px;font-size:12px;font-weight:400;transform:scaleX(0.9);transform-origin:0 0;color:#c6c0bb;">Display Only</div>
<svg width="30" height="30" style="left:839px;top:1182px" fill="none" stroke="#aea7a2" stroke-width="1"><path d="M3 27 L1 25 L4 17 L19 2 C21 0 24 1 25 2.5 C26.5 4 27 7 25 9 L10 24 Z M4 17 L10 24 M16 5 L22 11 M8 13 L10 15 M11 10 L13 12"/></svg>
<div class="t" style="left:875.5px;top:1189.84px;font-size:12px;font-weight:400;transform:scaleX(0.9);transform-origin:0 0;color:#c6c0bb;">Color Picker</div>
<svg width="30" height="30" style="left:839px;top:1228px" fill="none" stroke="#aea7a2" stroke-width="1"><path d="M0.5 3 L0.5 28.5 L28.5 28.5 L28.5 7.5 L13 7.5 L10 3 Z"/><circle cx="12" cy="17" r="5.5"/><path d="M16 21 L21 26"/></svg>
<div class="t" style="left:875.5px;top:1236.14px;font-size:12px;font-weight:400;transform:scaleX(0.9);transform-origin:0 0;color:#c6c0bb;">File Browse...</div>
<svg width="30" height="30" style="left:1031px;top:1182px" fill="none" stroke="#aea7a2" stroke-width="1"><rect x="0.5" y="3.5" width="28" height="24" rx="2"/><path d="M0.5 8.5 L28.5 8.5 M7.5 0.5 L7.5 5.5 M21.5 0.5 L21.5 5.5"/><g stroke-width="2" stroke-dasharray="1.5 3"><path d="M5 14 L25 14 M5 18.5 L25 18.5 M5 23 L21 23"/></g></svg>
<div class="t" style="left:1067.5px;top:1189.84px;font-size:12px;font-weight:400;transform:scaleX(0.9);transform-origin:0 0;color:#c6c0bb;">Date Picker</div>
<svg width="30" height="30" style="left:1031px;top:1228px" fill="none" stroke="#aea7a2" stroke-width="1"><path d="M11 27 L3 15 C1 12 1 10 1 9 C1 4 5.5 0.8 10 0.8 C14.5 0.8 19 4 19 9 C19 10 19 12 17 15 Z" transform="translate(4,0)"/><circle cx="14" cy="9" r="3"/></svg>
<div class="t" style="left:1067.5px;top:1236.14px;font-size:12px;font-weight:400;transform:scaleX(0.9);transform-origin:0 0;color:#c6c0bb;">Geocoded Address</div>
<svg width="30" height="30" style="left:1223px;top:1182px" fill="none" stroke="#aea7a2" stroke-width="1"><rect x="0.5" y="0.5" width="28" height="25"/><circle cx="7.5" cy="7.5" r="2"/><path d="M0.5 25 L12 13 L16 17 L21 11 L28.5 18 M8 25.5 L21 11"/></svg>
<div class="t" style="left:1259.5px;top:1189.84px;font-size:12px;font-weight:400;transform:scaleX(0.9);transform-origin:0 0;color:#c6c0bb;">Display Image</div>
<svg width="30" height="30" style="left:1223px;top:1228px" fill="none" stroke="#aea7a2" stroke-width="1"><path d="M1 14 C6 6 22 6 27 14 C22 22 6 22 1 14 Z"/><circle cx="14" cy="14" r="5"/><path d="M3 27 L27 1"/></svg>
<div class="t" style="left:1259.5px;top:1236.14px;font-size:12px;font-weight:400;transform:scaleX(0.9);transform-origin:0 0;color:#c6c0bb;">Hidden</div>
<svg width="6" height="10" style="left:439px;top:678px"><path d="M4.5 0.5 L0.5 4.5 L4.5 8.5 Z" fill="#f2efec"/></svg>
<svg width="6" height="10" style="left:1415px;top:679px;z-index:5"><path d="M0.5 0.5 L4.5 4.5 L0.5 8.5 Z" fill="#f2efec"/></svg>
<!--/C-->
<div id="sp2" class="a"></div>
<div id="rp" class="a"></div>
<!--R--><div class="t" style="left:1441px;top:111.84px;font-size:12px;font-weight:400;color:#f3f0ec;">Region</div>
<div class="t" style="left:1501px;top:111.84px;font-size:12px;font-weight:400;letter-spacing:-0.1px;color:#c4bdb8;">Attributes</div>
<div class="a" style="left:1441px;top:133px;width:37px;height:3px;background:#64a26f"></div>
<div class="a" style="left:1421px;top:136px;width:627px;height:1px;background:#45403c"></div>
<div class="a" style="left:1429px;top:145px;width:541px;height:31px;background:#1b1817;border-radius:3px"></div>
<svg width="20" height="20" style="left:1436px;top:152px"><circle cx="7.5" cy="7.5" r="6" fill="none" stroke="#b9b2ad" stroke-width="1.1"/><path d="M11.8 11.8 L16 16" stroke="#b9b2ad" stroke-width="1.1"/></svg>
<div class="t" style="left:1460px;top:154.34px;font-size:12px;font-weight:400;color:#8a837e;">Filter</div>
<svg width="30" height="16" style="left:1997px;top:153px" fill="none" stroke="#d9d3ce" stroke-width="1.1"><path d="M1.5 0.5 L1.5 7 C1.5 10.5 3.5 12.5 7 12.5 L14.5 12.5 M11.5 9.5 L14.5 12.5 L11.5 15"/><path d="M19.5 5.5 L23.5 9.5 L27.5 5.5"/></svg>
<div class="a" style="left:2040px;top:185px;width:8px;height:1081px;background:#46413d"></div>
<div class="a" style="left:2040px;top:185px;width:8px;height:485px;background:#85807b;border-radius:4px"></div>
<div class="a" style="left:1421px;top:185px;width:619px;height:4px;background:#46413d"></div><div class="a" style="left:1429px;top:202.3px;width:16px;height:16px;background:#6b6560;border-radius:2px"></div><svg width="10" height="6" style="left:1432.5px;top:208.3px"><path d="M0.5 0.5 L4.5 4.5 L8.5 0.5" fill="none" stroke="#2f2b28" stroke-width="1.1"/></svg><div class="t" style="left:1451px;top:203.53px;font-size:14.5px;font-weight:400;letter-spacing:0.1px;transform:scaleX(1.02);transform-origin:0 0;color:#f5f2ef;-webkit-text-stroke:0.45px #f5f2ef">Identification</div>
<div class="t" style="left:1429.5px;top:245.24px;font-size:12px;font-weight:400;letter-spacing:-0.1px;color:#e3ddd8;">Title</div><div class="a" style="left:1538px;top:239px;width:494px;height:24px;background:#1b1817;border-radius:1.5px"></div><div class="t" style="left:1542.5px;top:245.24px;font-size:12px;font-weight:400;letter-spacing:-0.15px;color:#f2eeea;">Search Results</div>
<div class="t" style="left:1429.5px;top:276.24px;font-size:12px;font-weight:400;letter-spacing:-0.1px;color:#e3ddd8;">Type</div><div class="a" style="left:1538px;top:270px;width:455px;height:24px;background:#1b1817;border-radius:1.5px"></div><div class="t" style="left:1542.5px;top:276.24px;font-size:12px;font-weight:400;letter-spacing:-0.15px;color:#f2eeea;">Calendar</div><svg width="12" height="8" style="left:1972.5px;top:279.5px"><path d="M0.5 0.5 L5 5 L9.5 0.5" fill="none" stroke="#d9d3ce" stroke-width="1.1"/></svg><div class="a" style="left:2001px;top:270px;width:31px;height:24px;background:#1b1817;border:1px solid #4d4743;border-radius:2px"></div><svg width="22" height="16" style="left:2006px;top:274px" fill="none" stroke="#e6e1dc" stroke-width="1"><circle cx="5" cy="2.5" r="1.4"/><circle cx="5" cy="7.5" r="1.4"/><circle cx="5" cy="12.5" r="1.4"/><path d="M9 2.5 L19 2.5 M9 7.5 L19 7.5 M9 12.5 L19 12.5"/></svg>
<div class="a" style="left:1421px;top:302px;width:619px;height:4px;background:#46413d"></div><div class="a" style="left:1429px;top:319.1px;width:16px;height:16px;background:#6b6560;border-radius:2px"></div><svg width="10" height="6" style="left:1432.5px;top:325.1px"><path d="M0.5 0.5 L4.5 4.5 L8.5 0.5" fill="none" stroke="#2f2b28" stroke-width="1.1"/></svg><div class="t" style="left:1451px;top:320.33px;font-size:14.5px;font-weight:400;letter-spacing:0.1px;transform:scaleX(1.02);transform-origin:0 0;color:#f5f2ef;-webkit-text-stroke:0.45px #f5f2ef">Source</div>
<div class="t" style="left:1429.5px;top:361.74px;font-size:12px;font-weight:400;letter-spacing:-0.1px;color:#e3ddd8;">Location</div><div class="a" style="left:1538px;top:356px;width:494px;height:23px;background:#1b1817;border-radius:1.5px"></div><div class="t" style="left:1542.5px;top:361.74px;font-size:12px;font-weight:400;letter-spacing:-0.15px;color:#f2eeea;">Local Database</div><svg width="12" height="8" style="left:2011.5px;top:365.0px"><path d="M0.5 0.5 L5 5 L9.5 0.5" fill="none" stroke="#d9d3ce" stroke-width="1.1"/></svg>
<div class="t" style="left:1429.5px;top:392.74px;font-size:12px;font-weight:400;letter-spacing:-0.1px;color:#e3ddd8;">Type</div><div class="a" style="left:1538px;top:387px;width:494px;height:23px;background:#1b1817;border-radius:1.5px"></div><div class="t" style="left:1542.5px;top:392.74px;font-size:12px;font-weight:400;letter-spacing:-0.15px;color:#f2eeea;">SQL Query</div><svg width="12" height="8" style="left:2011.5px;top:396.0px"><path d="M0.5 0.5 L5 5 L9.5 0.5" fill="none" stroke="#d9d3ce" stroke-width="1.1"/></svg>
<div class="t" style="left:1429.5px;top:423.74px;font-size:12px;font-weight:400;letter-spacing:-0.1px;color:#e3ddd8;">SQL Query</div>
<div class="a" style="left:2001px;top:418px;width:31px;height:24px;background:#1b1817;border-radius:2px"></div>
<svg width="18" height="18" style="left:2008px;top:421px" fill="none" stroke="#e6e1dc" stroke-width="1.1"><path d="M1 1 L15 1 L15 15 L1 15 Z M5 11 L11 5 M6.5 5 L11 5 L11 9.5"/></svg>
<div class="a" style="left:1429px;top:446px;width:603px;height:153px;background:#1b1817;overflow:hidden">
<div class="t code" style="left:4.5px;top:4.59px"><u>select</u></div>
<div class="t code" style="left:4.5px;top:18.27px"><u>vac.vacancy_id</u>,</div>
<div class="t code" style="left:4.5px;top:31.95px"><u>peo.person_chrisname</u> || &#x27; &#x27; || <u>peo.person_name</u> <u>pn</u>,</div>
<div class="t code" style="left:4.5px;top:45.63px"><u>peo.username</u> <u>pnu</u>,</div>
<div class="t code" style="left:4.5px;top:59.30px"><u>peo2.person_chrisname</u> || &#x27; &#x27; || <u>peo2.person_name</u> sub,</div>
<div class="t code" style="left:4.5px;top:72.99px"><u>peo2.username</u> <u>subu</u>,</div>
<div class="t code" style="left:4.5px;top:86.66px"><u>trunc</u>(<u>vac.startdate</u>) <u>dstart</u>,</div>
<div class="t code" style="left:4.5px;top:100.34px"><u>trunc</u>(<u>vac.stopdate</u>) <u>dend</u>,</div>
<div class="t code" style="left:4.5px;top:114.03px"><u>ped.abteilung</u> <u>division</u>,</div>
<div class="t code" style="left:4.5px;top:127.71px"><u>abt.id</u> <u>abtid</u>,</div>
<div class="t code" style="left:4.5px;top:141.39px"><u>case</u> <u>when</u> <u>vac.vacancy_id</u> <u>is</u> not null <u>then</u> <u>&#x27;apex-cal-created&#x27;</u></div>
</div>
<div class="a" style="left:2025px;top:447px;width:7px;height:43px;background:#5f5955;border-radius:3px"></div>
<div class="a" style="left:2025px;top:592px;width:7px;height:7px;background:#f0ece8"></div>
<div class="t" style="left:1429.5px;top:612.84px;font-size:12px;font-weight:400;letter-spacing:-0.1px;color:#e3ddd8;">Page Items to</div><div class="t" style="left:1429.5px;top:628.34px;font-size:12px;font-weight:400;letter-spacing:-0.1px;color:#e3ddd8;">Submit</div><div class="a" style="left:1538px;top:615px;width:455px;height:23px;background:#1b1817;border-radius:1.5px"></div><div class="a" style="left:2001px;top:615px;width:31px;height:23px;background:#1b1817;border:1px solid #4d4743;border-radius:2px"></div><svg width="22" height="16" style="left:2006px;top:618px" fill="none" stroke="#e6e1dc" stroke-width="1"><circle cx="5" cy="2.5" r="1.4"/><circle cx="5" cy="7.5" r="1.4"/><circle cx="5" cy="12.5" r="1.4"/><path d="M9 2.5 L19 2.5 M9 7.5 L19 7.5 M9 12.5 L19 12.5"/></svg>
<div class="t" style="left:1429.5px;top:659.74px;font-size:12px;font-weight:400;letter-spacing:-0.1px;color:#e3ddd8;">Optimizer Hint</div><div class="a" style="left:1538px;top:654px;width:494px;height:23px;background:#1b1817;border-radius:1.5px"></div>
<div class="a" style="left:1421px;top:685px;width:619px;height:4px;background:#46413d"></div><div class="a" style="left:1429px;top:701.4px;width:16px;height:16px;background:#6b6560;border-radius:2px"></div><svg width="10" height="6" style="left:1432.5px;top:707.4px"><path d="M0.5 0.5 L4.5 4.5 L8.5 0.5" fill="none" stroke="#2f2b28" stroke-width="1.1"/></svg><div class="t" style="left:1451px;top:702.63px;font-size:14.5px;font-weight:400;letter-spacing:0.1px;transform:scaleX(1.02);transform-origin:0 0;color:#f5f2ef;-webkit-text-stroke:0.45px #f5f2ef">Layout</div>
<div class="t" style="left:1429.5px;top:745.74px;font-size:12px;font-weight:400;letter-spacing:-0.1px;color:#e3ddd8;">Sequence</div><div class="a" style="left:1538px;top:740px;width:494px;height:23px;background:#1b1817;border-radius:1.5px"></div><div class="t" style="left:1542.5px;top:745.74px;font-size:12px;font-weight:400;letter-spacing:-0.15px;color:#f2eeea;">20</div>
<div class="t" style="left:1429.5px;top:776.74px;font-size:12px;font-weight:400;letter-spacing:-0.1px;color:#e3ddd8;">Parent Region</div><div class="a" style="left:1538px;top:771px;width:455px;height:23px;background:#1b1817;border-radius:1.5px"></div><div class="t" style="left:1542.5px;top:776.74px;font-size:12px;font-weight:400;letter-spacing:-0.15px;color:#f2eeea;">No Parent</div><svg width="12" height="8" style="left:1972.5px;top:780.0px"><path d="M0.5 0.5 L5 5 L9.5 0.5" fill="none" stroke="#d9d3ce" stroke-width="1.1"/></svg><div class="a" style="left:2001px;top:771px;width:31px;height:23px;background:#2e2a27;border:1px solid #3f3a36;border-radius:2px"></div><svg width="8" height="12" style="left:2014px;top:777px"><path d="M0.5 0.5 L5 5 L0.5 9.5" fill="none" stroke="#6f6863" stroke-width="1"/></svg>
<div class="t" style="left:1429.5px;top:807.74px;font-size:12px;font-weight:400;letter-spacing:-0.1px;color:#e3ddd8;">Position</div><div class="a" style="left:1538px;top:802px;width:455px;height:23px;background:#1b1817;border-radius:1.5px"></div><div class="t" style="left:1542.5px;top:807.74px;font-size:12px;font-weight:400;letter-spacing:-0.15px;color:#f2eeea;">Body</div><svg width="12" height="8" style="left:1972.5px;top:811.0px"><path d="M0.5 0.5 L5 5 L9.5 0.5" fill="none" stroke="#d9d3ce" stroke-width="1.1"/></svg><div class="a" style="left:2001px;top:802px;width:31px;height:23px;background:#1b1817;border:1px solid #4d4743;border-radius:2px"></div><svg width="22" height="16" style="left:2006px;top:806px" fill="none" stroke="#e6e1dc" stroke-width="1"><circle cx="5" cy="2.5" r="1.4"/><circle cx="5" cy="7.5" r="1.4"/><circle cx="5" cy="12.5" r="1.4"/><path d="M9 2.5 L19 2.5 M9 7.5 L19 7.5 M9 12.5 L19 12.5"/></svg>
<div class="t" style="left:1429.5px;top:838.74px;font-size:12px;font-weight:400;letter-spacing:-0.1px;color:#e3ddd8;">Start New Row</div>
<div class="a" style="left:1538px;top:833px;width:43px;height:23px;background:#13805a;border-radius:7px"></div>
<div class="a" style="left:1559.5px;top:835px;width:20px;height:19px;background:#f7f5f2;border-radius:6px"></div>
<div class="t" style="left:1429.5px;top:870.24px;font-size:12px;font-weight:400;letter-spacing:-0.1px;color:#e3ddd8;">Row CSS Classes</div><div class="a" style="left:1538px;top:865px;width:455px;height:22px;background:#1b1817;border-radius:1.5px"></div><div class="a" style="left:2001px;top:865px;width:31px;height:22px;background:#1b1817;border:1px solid #4d4743;border-radius:2px"></div><svg width="22" height="16" style="left:2006px;top:868px" fill="none" stroke="#e6e1dc" stroke-width="1"><circle cx="5" cy="2.5" r="1.4"/><circle cx="5" cy="7.5" r="1.4"/><circle cx="5" cy="12.5" r="1.4"/><path d="M9 2.5 L19 2.5 M9 7.5 L19 7.5 M9 12.5 L19 12.5"/></svg>
<div class="t" style="left:1429.5px;top:901.24px;font-size:12px;font-weight:400;letter-spacing:-0.1px;color:#e3ddd8;">Column</div><div class="a" style="left:1538px;top:896px;width:494px;height:22px;background:#1b1817;border-radius:1.5px"></div><div class="t" style="left:1542.5px;top:901.24px;font-size:12px;font-weight:400;letter-spacing:-0.15px;color:#f2eeea;">Automatic</div><svg width="12" height="8" style="left:2011.5px;top:904.5px"><path d="M0.5 0.5 L5 5 L9.5 0.5" fill="none" stroke="#d9d3ce" stroke-width="1.1"/></svg>
<div class="t" style="left:1429.5px;top:932.74px;font-size:12px;font-weight:400;letter-spacing:-0.1px;color:#e3ddd8;">Column Span</div><div class="a" style="left:1538px;top:927px;width:494px;height:23px;background:#1b1817;border-radius:1.5px"></div><div class="t" style="left:1542.5px;top:932.74px;font-size:12px;font-weight:400;letter-spacing:-0.15px;color:#f2eeea;">Automatic</div><svg width="12" height="8" style="left:2011.5px;top:936.0px"><path d="M0.5 0.5 L5 5 L9.5 0.5" fill="none" stroke="#d9d3ce" stroke-width="1.1"/></svg>
<div class="t" style="left:1429.5px;top:963.34px;font-size:12px;font-weight:400;letter-spacing:-0.1px;color:#e3ddd8;">Column CSS</div><div class="t" style="left:1429.5px;top:978.84px;font-size:12px;font-weight:400;letter-spacing:-0.1px;color:#e3ddd8;">Classes</div><div class="a" style="left:1538px;top:966px;width:455px;height:22px;background:#1b1817;border-radius:1.5px"></div><div class="a" style="left:2001px;top:966px;width:31px;height:22px;background:#1b1817;border:1px solid #4d4743;border-radius:2px"></div><svg width="22" height="16" style="left:2006px;top:969px" fill="none" stroke="#e6e1dc" stroke-width="1"><circle cx="5" cy="2.5" r="1.4"/><circle cx="5" cy="7.5" r="1.4"/><circle cx="5" cy="12.5" r="1.4"/><path d="M9 2.5 L19 2.5 M9 7.5 L19 7.5 M9 12.5 L19 12.5"/></svg>
<div class="t" style="left:1429.5px;top:1010.24px;font-size:12px;font-weight:400;letter-spacing:-0.1px;color:#e3ddd8;">Column Attributes</div><div class="a" style="left:1538px;top:1005px;width:455px;height:22px;background:#1b1817;border-radius:1.5px"></div><div class="a" style="left:2001px;top:1005px;width:31px;height:22px;background:#1b1817;border:1px solid #4d4743;border-radius:2px"></div><svg width="22" height="16" style="left:2006px;top:1008px" fill="none" stroke="#e6e1dc" stroke-width="1"><circle cx="5" cy="2.5" r="1.4"/><circle cx="5" cy="7.5" r="1.4"/><circle cx="5" cy="12.5" r="1.4"/><path d="M9 2.5 L19 2.5 M9 7.5 L19 7.5 M9 12.5 L19 12.5"/></svg>
<div class="a" style="left:1421px;top:1035px;width:619px;height:4px;background:#46413d"></div><div class="a" style="left:1429px;top:1052.3px;width:16px;height:16px;background:#6b6560;border-radius:2px"></div><svg width="10" height="6" style="left:1432.5px;top:1058.3px"><path d="M0.5 0.5 L4.5 4.5 L8.5 0.5" fill="none" stroke="#2f2b28" stroke-width="1.1"/></svg><div class="t" style="left:1451px;top:1053.53px;font-size:14.5px;font-weight:400;letter-spacing:0.1px;transform:scaleX(1.02);transform-origin:0 0;color:#f5f2ef;-webkit-text-stroke:0.45px #f5f2ef">Appearance</div>
<div class="t" style="left:1429.5px;top:1095.74px;font-size:12px;font-weight:400;letter-spacing:-0.1px;color:#e3ddd8;">Template</div><div class="a" style="left:1538px;top:1090px;width:455px;height:23px;background:#1b1817;border-radius:1.5px"></div><div class="t" style="left:1542.5px;top:1095.74px;font-size:12px;font-weight:400;letter-spacing:-0.15px;color:#f2eeea;">Blank with Attributes</div><svg width="12" height="8" style="left:1972.5px;top:1099.0px"><path d="M0.5 0.5 L5 5 L9.5 0.5" fill="none" stroke="#d9d3ce" stroke-width="1.1"/></svg><div class="a" style="left:2001px;top:1090px;width:31px;height:23px;background:#1b1817;border:1px solid #4d4743;border-radius:2px"></div><svg width="8" height="12" style="left:2014px;top:1097px"><path d="M0.5 0.5 L5 5 L0.5 9.5" fill="none" stroke="#e6e1dc" stroke-width="1"/></svg>
<div class="t" style="left:1429.5px;top:1128.74px;font-size:12px;font-weight:400;letter-spacing:-0.15px;color:#e3ddd8;">Template Options</div>
<div class="a" style="left:1538px;top:1121px;width:494px;height:27px;background:#403a36;border:1px solid #58514c;border-radius:2px"></div>
<div class="t" style="left:1538px;top:1128.74px;font-size:12px;font-weight:400;letter-spacing:-0.1px;color:#e6e1dc;width:494px;text-align:center">Use Template Defaults</div>
<div class="t" style="left:1429.5px;top:1161.74px;font-size:12px;font-weight:400;letter-spacing:-0.1px;color:#e3ddd8;">CSS Classes</div><div class="a" style="left:1538px;top:1156px;width:455px;height:23px;background:#1b1817;border-radius:1.5px"></div><div class="a" style="left:2001px;top:1156px;width:31px;height:23px;background:#1b1817;border:1px solid #4d4743;border-radius:2px"></div><svg width="22" height="16" style="left:2006px;top:1160px" fill="none" stroke="#e6e1dc" stroke-width="1"><circle cx="5" cy="2.5" r="1.4"/><circle cx="5" cy="7.5" r="1.4"/><circle cx="5" cy="12.5" r="1.4"/><path d="M9 2.5 L19 2.5 M9 7.5 L19 7.5 M9 12.5 L19 12.5"/></svg>
<div class="t" style="left:1429.5px;top:1192.74px;font-size:12px;font-weight:400;letter-spacing:-0.1px;color:#e3ddd8;">Icon</div><div class="a" style="left:1538px;top:1187px;width:455px;height:23px;background:#1b1817;border-radius:1.5px"></div><div class="a" style="left:2001px;top:1187px;width:31px;height:23px;background:#1b1817;border:1px solid #4d4743;border-radius:2px"></div><svg width="22" height="16" style="left:2006px;top:1190px" fill="none" stroke="#e6e1dc" stroke-width="1"><circle cx="5" cy="2.5" r="1.4"/><circle cx="5" cy="7.5" r="1.4"/><circle cx="5" cy="12.5" r="1.4"/><path d="M9 2.5 L19 2.5 M9 7.5 L19 7.5 M9 12.5 L19 12.5"/></svg>
<div class="t" style="left:1429.5px;top:1223.84px;font-size:12px;font-weight:400;letter-spacing:-0.1px;color:#e3ddd8;">Render</div><div class="t" style="left:1429.5px;top:1239.34px;font-size:12px;font-weight:400;letter-spacing:-0.1px;color:#e3ddd8;">Components</div><div class="a" style="left:1538px;top:1226px;width:494px;height:23px;background:#1b1817;border-radius:1.5px"></div><div class="t" style="left:1542.5px;top:1231.74px;font-size:12px;font-weight:400;letter-spacing:-0.15px;color:#f2eeea;">Above Content</div><svg width="12" height="8" style="left:2011.5px;top:1235.0px"><path d="M0.5 0.5 L5 5 L9.5 0.5" fill="none" stroke="#d9d3ce" stroke-width="1.1"/></svg>
<!--/R-->
</body></html>
